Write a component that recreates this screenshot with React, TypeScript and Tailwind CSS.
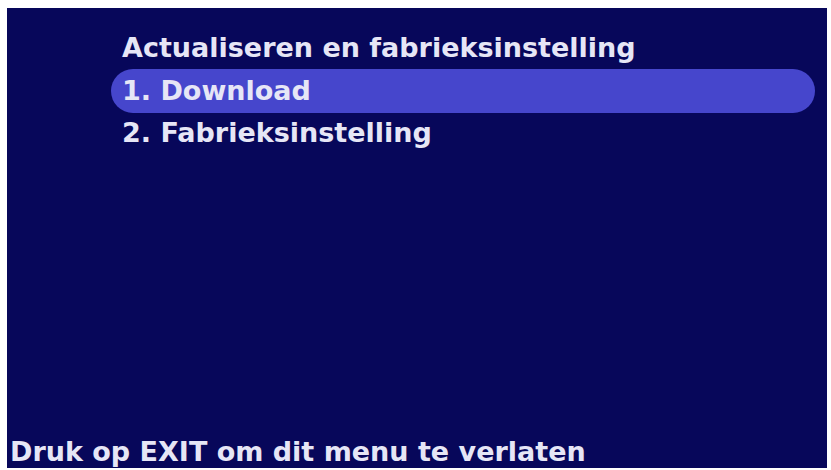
export default function App() {
  return (
    <div className="h-[470px] w-[831px] bg-white pt-[8px] pl-[7px] pr-[4px] pb-[2px]">
      <div
        className="flex h-full w-full flex-col bg-[#07075a] text-[#e6e6f6]"
        style={{ fontFamily: '"DejaVu Sans", "Liberation Sans", sans-serif' }}
      >
        <div className="pl-[115px] pt-[24px] text-[27px] font-bold leading-[32px]">
          Actualiseren en fabrieksinstelling
        </div>
        <div className="mt-[5px] ml-[104px] mr-[12px] flex h-[44px] items-center rounded-full bg-[#4646cc] pl-[11px] text-[27px] font-bold">
          1. Download
        </div>
        <div className="pl-[115px] text-[27px] font-bold leading-[40px]">
          2. Fabrieksinstelling
        </div>
        <div className="mt-auto pl-[3px] text-[27px] font-bold leading-[32px]">
          Druk op EXIT om dit menu te verlaten
        </div>
      </div>
    </div>
  );
}
